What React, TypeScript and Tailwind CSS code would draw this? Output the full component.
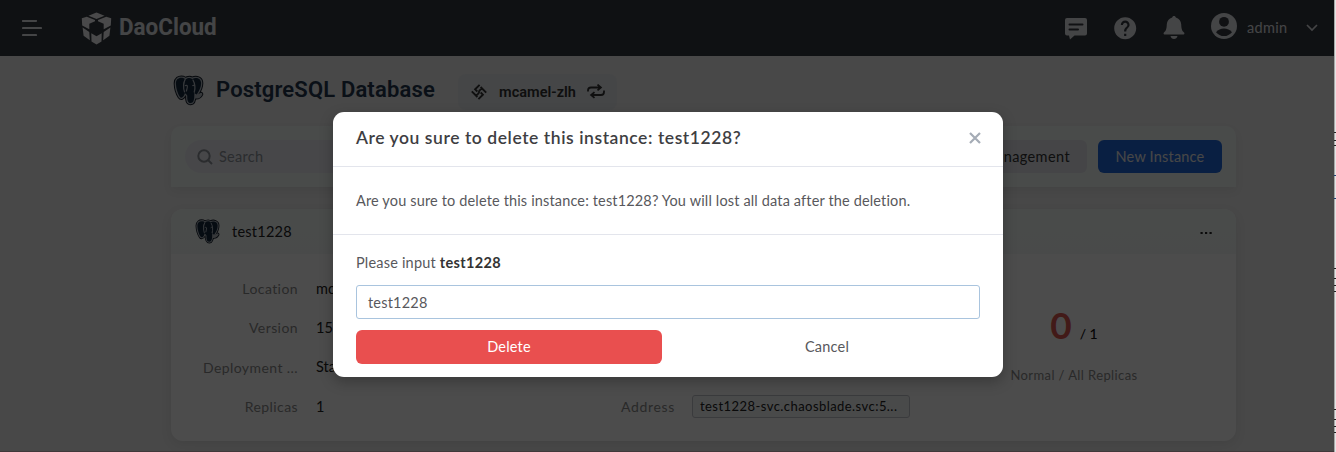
import React from "react";
import { MdHelp } from "react-icons/md";

const LEFT_EAR = "M10.500 3C6 2 2.800 4.500 3 9c.2 5 2 10.500 4 13.500 1.300 1.800 3 .8 4.500-1.500l1-3C10.500 14 10 8 12.500 4z";
const RIGHT_EAR = "M20 4c4-2 9-.5 9 4.500 0 4-2 8-4.500 11.500L22.500 19c1-4 .5-11-2.500-15z";
const TRUNK = "M11.500 9C12 4.500 14 3 17 3c3.500 0 5.500 4 5.700 8.500.1 3-.7 5-.7 9 0 4-.3 8.500-3.700 8.500-3.300 0-3.600-3-3.600-7.500 0-2-3.200-2-3.400-5.500z";
const TUSK = "M22 20.500c2 1.200 5 .8 7-.8-1.500 3-4.500 3.600-7 3z";

function Elephant({ size }: { size: number }) {
  return (
    <svg width={size} height={size} viewBox="0 0 32 32" strokeLinejoin="round" className="shrink-0">
      <g fill="#1c3148" stroke="#141d2a" strokeWidth="4.600">
        <path d={LEFT_EAR} /><path d={RIGHT_EAR} /><path d={TRUNK} /><path d={TUSK} />
      </g>
      <g fill="#1c3148" stroke="#b4bcc4" strokeWidth="2.600">
        <path d={LEFT_EAR} /><path d={RIGHT_EAR} /><path d={TRUNK} /><path d={TUSK} />
      </g>
      <g fill="#14283e">
        <path d={LEFT_EAR} /><path d={RIGHT_EAR} /><path d={TRUNK} />
      </g>
      <path d="M12.600 4.500c-2.300 4-2 9-.6 13.500M20.500 5c2.300 4 2.600 9 1.300 13M12.300 11.200c1-.7 2.300-.7 2.500.3.200 2-.8 3.500-1 5.500M20 11.300c.8-.8 1.800-.8 2.300 0" fill="none" stroke="#b4bcc4" strokeWidth="1.200" />
    </svg>
  );
}

function Logo() {
  return (
    <svg width="31" height="33" viewBox="0 0 31 33" fill="#f5f6f7" className="shrink-0">
      <path d="M15.500 .5 23.500 3.800 15.500 7 7.500 3.800z" />
      <path d="M.8 6.200 5.800 4.700 14 8 14 9.300 8.300 11.700 8.300 17.200 1.200 13.500zM30.200 6.200 25.200 4.700 17 8 17 9.300 22.700 11.700 22.700 17.200 29.800 13.500z" />
      <path d="M1.600 15.600 8.300 20 8.800 28.200 2.600 23.800zM29.400 15.600 22.700 20 22.200 28.200 28.400 23.800z" />
      <path d="M10.300 21.200 15.500 24.200 20.700 21.200 20.500 29.400 15.500 32.600 10.500 29.400z" />
    </svg>
  );
}

function MessageIcon() {
  return (
    <svg width="22" height="22" viewBox="0 0 22 22" className="shrink-0">
      <path d="M2 0h18a2 2 0 0 1 2 2v13.500a2 2 0 0 1-2 2H9.500L5 21.500 4 17.500H2a2 2 0 0 1-2-2V2a2 2 0 0 1 2-2z" fill="#e4e6ea" />
      <path d="M4.500 6.500h13M4.500 11.500h8.500" stroke="#363a42" strokeWidth="2" strokeLinecap="round" />
    </svg>
  );
}

function BellIcon() {
  return (
    <svg width="22" height="24" viewBox="0 0 22 24" fill="#e4e6ea" className="shrink-0">
      <path d="M11 0c1 0 1.700.7 1.800 1.500C16 2.400 18 5 18.200 8.300c.2 5 .8 6.500 2.800 8.200.8.7.4 2-.5 2h-19c-.9 0-1.300-1.300-.5-2 2-1.700 2.600-3.200 2.800-8.200C4 5 6 2.400 9.200 1.500 9.300.7 10 0 11 0zM7.500 20h7c-.4 1.800-1.800 3-3.500 3s-3.100-1.200-3.500-3z" />
    </svg>
  );
}

function UserIcon() {
  return (
    <svg width="26" height="26" viewBox="0 0 26 26" className="shrink-0">
      <circle cx="13" cy="13" r="13" fill="#e4e6ea" />
      <circle cx="13" cy="8.800" r="4.900" fill="#363a42" />
      <path d="M5 19.200c2-2.400 4.800-3.700 8-3.700s6 1.300 8 3.700c-2 2.400-4.800 3.900-8 3.900s-6-1.500-8-3.900z" fill="#363a42" />
    </svg>
  );
}

function WorkspaceIcon() {
  return (
    <svg width="16" height="16" viewBox="0 0 16 16" fill="none" stroke="#333" strokeWidth="1.900" className="shrink-0">
      <path d="M8.600 .8 4.100 5.300 6.300 7.500M7.400 15.200l4.500-4.500-2.200-2.200M.8 7.400l5.600 5.600M15.200 8.600 9.600 3M8 8.900 5.300 11.600M8 7.100l2.700-2.700" />
      <path d="M8 6.500 9.500 8 8 9.500 6.500 8z" fill="#333" stroke="none" />
    </svg>
  );
}

function SwapIcon() {
  return (
    <svg width="18" height="16" viewBox="0 0 18 16" fill="none" stroke="#333" strokeWidth="1.800" className="shrink-0">
      <path d="M1 7.500V6.500a3 3 0 0 1 3-3h9.500M10.500.6l3.400 2.900-3.400 2.900M17 6.500V8a3 3 0 0 1-3 3H4.500M7.500 8.100 4.100 11l3.400 2.900" />
    </svg>
  );
}

function Field({ label, value }: { label: string; value: string }) {
  return (
    <div className="flex h-[39.300px] items-center">
      <span className="w-[127px] text-right text-[14px] tracking-[0.42px] text-[#8b8b8b]">{label}</span>
      <span className="ml-[18px] text-[14.500px] text-[#222]">{value}</span>
    </div>
  );
}

const EDGE_MARKS = [
  { y: 132, tone: "bg-[#222]" },
  { y: 140, tone: "bg-[#222]" },
  { y: 145, tone: "bg-[#222]" },
  { y: 175, tone: "bg-[#1f3f73]" },
  { y: 198, tone: "bg-[#1f3f73]" },
  { y: 268, tone: "bg-[#222]" },
  { y: 278, tone: "bg-[#222]" },
  { y: 285, tone: "bg-[#222]" },
  { y: 291, tone: "bg-[#222]" },
  { y: 409, tone: "bg-[#222]" },
  { y: 419, tone: "bg-[#222]" },
  { y: 426, tone: "bg-[#222]" },
  { y: 432, tone: "bg-[#222]" },
];

export default function App() {
  return (
    <div className="relative h-[452px] w-[1336px] overflow-hidden bg-[#e4e4e4] font-['Lato','Noto_Sans',sans-serif] [font-variant-ligatures:none]">
      <div className="h-full w-[1334px] bg-[#f0f0f0]">
        <header className="flex h-14 items-center bg-[#353a41] pl-[22px] pr-[16px] text-[#e4e6ea]">
          <svg width="20" height="16" viewBox="0 0 20 16" stroke="#e4e6ea" strokeWidth="2.200" strokeLinecap="round">
            <path d="M1 1h13M1 8h18M1 15h13" />
          </svg>
          <div className="ml-[39px] flex items-center">
            <Logo />
            <span className="ml-[7px] -mt-[2px] w-[98px] origin-left scale-x-[0.935] font-['Roboto',sans-serif] text-[24px] font-bold">DaoCloud</span>
          </div>
          <div className="ml-auto flex items-center">
            <div className="mt-[3px]"><MessageIcon /></div>
            <MdHelp className="ml-[25px]" size={26.4} />
            <div className="ml-[25px]"><BellIcon /></div>
            <div className="-mt-1 ml-[26px]"><UserIcon /></div>
            <span className="ml-[10px] w-[41px] text-[14.500px] tracking-[0.3px]">admin</span>
            <svg className="ml-[18px]" width="12" height="8" viewBox="0 0 12 8" fill="none" stroke="#e4e6ea" strokeWidth="1.700">
              <path d="m1 1 5 5 5-5" />
            </svg>
          </div>
        </header>

        <main className="ml-[171px] w-[1065px]">
          <div className="flex h-[70px] pt-[18px]">
            <div className="ml-[2px] mt-[1px]"><Elephant size={31} /></div>
            <h1 className="ml-[12px] w-[242px] whitespace-nowrap font-['Roboto',sans-serif] text-[22px] font-semibold leading-[31px] tracking-[0.16px] text-[#24364e]">PostgreSQL Database</h1>
            <div className="flex h-9 w-[159px] items-center rounded-lg bg-[#e8ebef] pl-[13px]">
              <WorkspaceIcon />
              <span className="ml-[12px] mt-[1px] w-[77px] whitespace-nowrap font-['Roboto',sans-serif] text-[14.500px] font-semibold tracking-[0.03px] text-[#333]">mcamel-zlh</span>
              <div className="ml-[11px]"><SwapIcon /></div>
            </div>
          </div>

          <section className="flex h-[61px] items-center rounded-t-[10px] bg-[#f6fbf9] px-[14px] shadow-[0_4px_10px_rgba(0,0,0,0.06)]">
            <div className="flex h-[33px] w-[300px] items-center rounded-full bg-[#edeff5] pl-[12px] text-[#8f949c]">
              <svg width="16" height="16" viewBox="0 0 16 16" fill="none" stroke="currentColor" strokeWidth="2">
                <circle cx="7" cy="7" r="5.700" /><path d="m11 11 4 4" />
              </svg>
              <span className="ml-[6px] text-[14.500px] tracking-[0.3px]">Search</span>
            </div>
            <div className="ml-auto flex h-[33px] w-[170px] items-center justify-end rounded-md bg-[#e6e8ee] pr-[17px] text-[14.500px] tracking-[0.4px] text-[#333]">Management</div>
            <div className="ml-[11px] flex h-[33px] w-[124px] items-center justify-center rounded-md bg-[#2069dc] text-[14.500px] tracking-[0.2px] text-[#ededed]">New Instance</div>
          </section>

          <section className="mt-[22px] h-[232px] overflow-hidden rounded-[12px] bg-white shadow-[0_4px_12px_rgba(0,0,0,0.08)]">
            <div className="flex h-[45px] items-center bg-gradient-to-b from-[#f6fbf9] to-[#f4f9f8] pl-[24px] pr-[24px]">
              <Elephant size={25} />
              <span className="ml-[12px] mt-[1px] text-[14.500px] tracking-[0.25px] text-[#222]">test1228</span>
              <svg className="ml-auto mt-[3px]" width="12" height="4" viewBox="0 0 12 4" fill="#222">
                <rect x=".500" y="1" width="2.200" height="2" /><rect x="5" y="1" width="2.200" height="2" /><rect x="9.500" y="1" width="2.200" height="2" />
              </svg>
            </div>
            <div className="flex pt-[15px]">
              <div className="w-[378px]">
                <Field label="Location" value="mcamel-zlh" />
                <Field label="Version" value="15.2" />
                <Field label="Deployment ..." value="Standalone" />
                <Field label="Replicas" value="1" />
              </div>
              <div className="flex w-[361px] flex-col justify-end">
                <div className="flex h-[39.300px] items-center">
                  <span className="w-[126px] text-right text-[14px] tracking-[0.65px] text-[#8b8b8b]">Address</span>
                  <span className="ml-[17px] flex h-[23px] w-[218px] items-center whitespace-nowrap rounded-[3px] border border-[#c4c6cc] bg-[#f6f7f9] px-[7px] text-[13px] tracking-[0.44px] text-[#222]">test1228-svc.chaosblade.svc:5...</span>
                </div>
              </div>
              <div className="ml-[64px] flex w-[200px] flex-col items-center pt-[34px]">
                <div className="flex items-baseline leading-[44px]">
                  <span className="text-[37px] font-bold text-[#dc5850]">0</span>
                  <span className="ml-[8px] text-[14px] font-medium text-[#111]">/ 1</span>
                </div>
                <span className="mt-[10px] whitespace-nowrap text-[13px] leading-[18px] tracking-[0.4px] text-[#8b8b8b]">Normal / All Replicas</span>
              </div>
            </div>
          </section>
        </main>
      </div>

      <div className="absolute left-0 top-0 h-[452px] w-[1334px] border-b border-[#40383a] bg-black/70" />
      <div className="absolute right-0 top-0 h-[452px] w-[2px] border-l border-[#a8a8a8]">
        {EDGE_MARKS.map((mark) => (
          <i key={mark.y} className={`absolute -left-px h-px w-[2px] ${mark.tone}`} style={{ top: mark.y }} />
        ))}
      </div>

      <div role="dialog" className="absolute left-[333px] top-[112px] h-[265px] w-[670px] rounded-[11px] bg-white shadow-[0_5px_14px_rgba(0,0,0,0.25)]">
        <div className="flex h-[55px] items-center justify-between border-b border-[#e3e5ec] pb-[2px] pl-[23px] pr-[22px]">
          <h2 className="whitespace-nowrap text-[17.500px] font-semibold tracking-[0.56px] text-[#3e3e42]">Are you sure to delete this instance: test1228?</h2>
          <svg width="13" height="12" viewBox="0 0 13 12" stroke="#a5acb6" strokeWidth="2.200"><path d="m2 1 10 10m0-10-10 10" /></svg>
        </div>
        <p className="flex h-[68px] items-center whitespace-nowrap border-b border-[#e3e5ec] pl-[23px] text-[14.500px] tracking-[0.15px] text-[#58585c]">Are you sure to delete this instance: test1228? You will lost all data after the deletion.</p>
        <div className="px-[23px] pt-[17px]">
          <div className="h-[22px] text-[14.500px] leading-[22px] tracking-[0.19px] text-[#58585c]">Please input <b className="tracking-[0.36px] text-[#333]">test1228</b></div>
          <div className="mt-[11px] flex h-[34px] items-center rounded-[3px] border border-[#a9c4de] pl-[11px] pt-[1px] text-[14.500px] tracking-[0.2px] text-[#58585c]">test1228</div>
          <div className="mt-[11px] flex">
            <div className="flex h-[34px] w-[306px] items-center justify-center rounded-[6px] bg-[#e94f4f] text-[14.500px] tracking-[0.2px] text-white">Delete</div>
            <div className="ml-[12px] flex h-[34px] w-[306px] items-center justify-center text-[14.500px] tracking-[0.2px] text-[#58585c]">Cancel</div>
          </div>
        </div>
      </div>
    </div>
  );
}
